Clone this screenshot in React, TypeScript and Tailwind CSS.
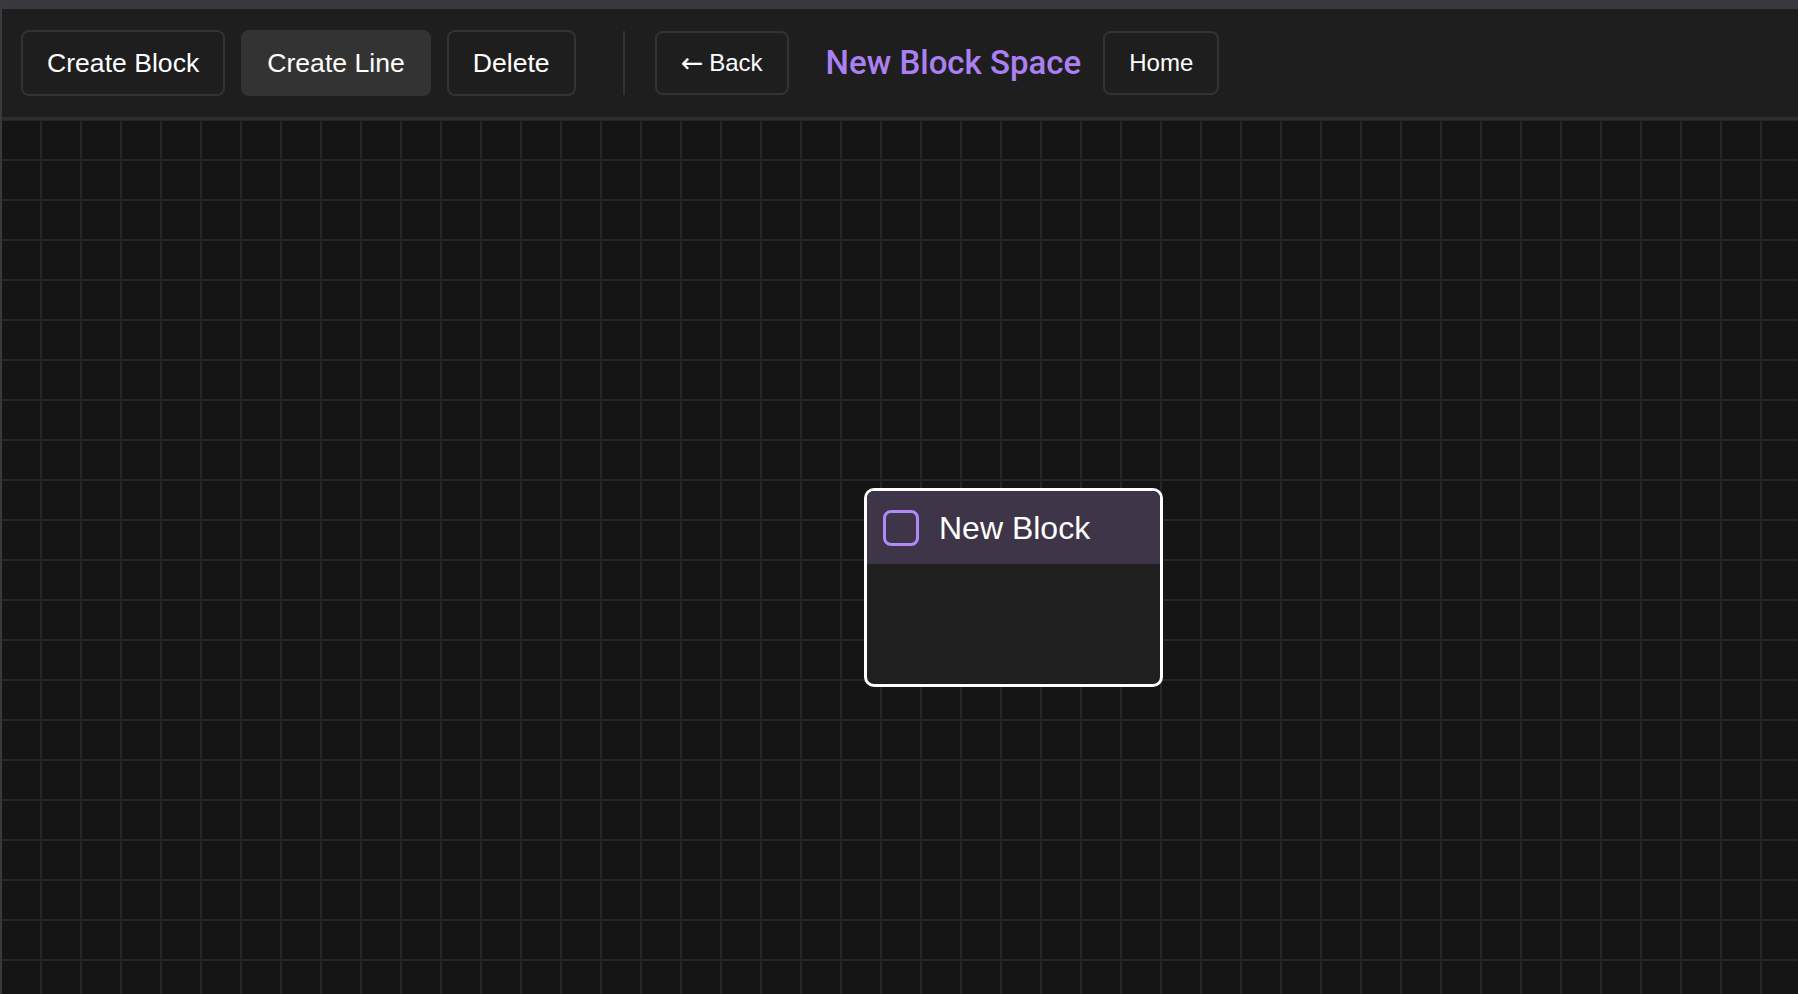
import React from 'react';

const btnBase = 'rounded-lg border-2 px-6 py-4 text-white whitespace-nowrap';

export default function App() {
  return (
    <div className="h-[994px] w-full flex flex-col overflow-hidden bg-[#141414] border-l-2 border-[#3a3a3a] font-['Liberation_Sans',Arial,sans-serif]">
      {/* window strip */}
      <div className="h-[9px] bg-[#38383d] shrink-0" />

      {/* Toolbar */}
      <div className="shrink-0 flex items-center gap-4 pl-[19px] py-[21px] bg-[#1e1e1e] border-b-[3px] border-[#2e2e2e]">
        <button className={`${btnBase} text-[26.6px] leading-[30px] border-[#333333] bg-[#1e1e1e]`}>
          Create Block
        </button>
        <button className={`${btnBase} text-[26.6px] leading-[30px] border-[#333333] bg-[#333333]`}>
          Create Line
        </button>
        <button className={`${btnBase} text-[26.6px] leading-[30px] border-[#333333] bg-[#1e1e1e]`}>
          Delete
        </button>
        <div className="w-[2px] h-[64px] bg-[#333333] ml-[31px] mr-[14px]" />
        <button className={`${btnBase} flex items-center h-[64px] text-[24px] leading-[28px] border-[#333333] bg-[#1e1e1e]`}>
          <span className="font-['DejaVu_Sans',sans-serif] text-[27px] leading-[28px]">←</span>
          <span className="ml-[6px]">Back</span>
        </button>
        <h1 className="ml-[21px] mr-[6px] text-[33px] leading-[36px] font-medium text-[#ab80f3] whitespace-nowrap font-['Roboto',sans-serif]">
          New Block Space
        </h1>
        <button className={`${btnBase} text-[24px] leading-[28px] border-[#333333] bg-[#1e1e1e]`}>
          Home
        </button>
      </div>

      {/* Canvas */}
      <div className="relative flex-1 bg-[#141414] bg-[linear-gradient(to_right,#262626_2px,transparent_2px),linear-gradient(to_bottom,#262626_2px,transparent_2px)] bg-[size:40px_40px] bg-[position:-2px_-1px]">
        <div className="absolute left-[862px] top-[368px] w-[299px] h-[199px] rounded-[10px] border-[3px] border-white bg-[#1f1f1f] overflow-hidden">
          <div className="h-[73px] flex items-center gap-5 pl-4 bg-[#3e3549]">
            <div className="w-[36px] h-[36px] rounded-[8px] border-[3px] border-[#b388f9]" />
            <span className="text-[32px] leading-none text-white">New Block</span>
          </div>
        </div>
      </div>
    </div>
  );
}
